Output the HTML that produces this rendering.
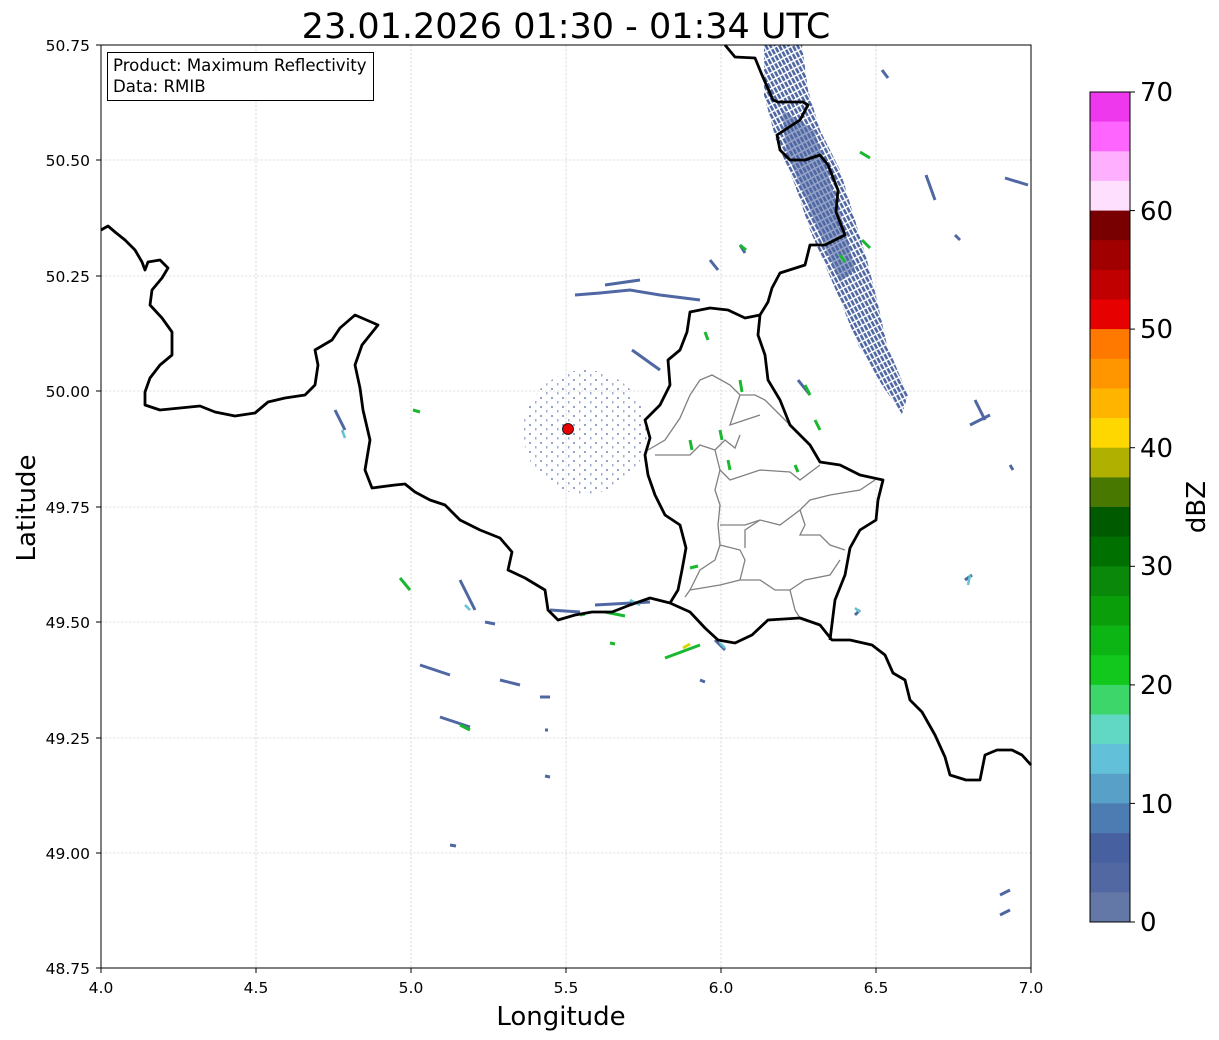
<!DOCTYPE html>
<html><head><meta charset="utf-8"><style>
html,body{margin:0;padding:0;background:#fff;}
svg{display:block;font-family:"DejaVu Sans","Liberation Sans",sans-serif;}
</style></head><body>
<svg width="1219" height="1040" viewBox="0 0 1219 1040" xmlns="http://www.w3.org/2000/svg">
<defs>
<pattern id="band" width="7" height="4" patternUnits="userSpaceOnUse" patternTransform="rotate(62)">
<rect width="5.5" height="2.6" fill="#4f67a3"/>
</pattern>
<pattern id="dots" width="11" height="9" patternUnits="userSpaceOnUse">
<rect x="1" y="1" width="2" height="2" fill="#4f67a3"/>
<rect x="7" y="5" width="1.5" height="2.5" fill="#5a78b0"/>
</pattern>
</defs>
<rect width="1219" height="1040" fill="#fff"/>
<text x="566" y="38" font-size="35" text-anchor="middle">23.01.2026 01:30 - 01:34 UTC</text>
<g stroke="#c8c8c8" stroke-width="0.6" stroke-dasharray="2.5,1.5">
<line x1="256" y1="45" x2="256" y2="968"/><line x1="411" y1="45" x2="411" y2="968"/>
<line x1="566" y1="45" x2="566" y2="968"/><line x1="721" y1="45" x2="721" y2="968"/>
<line x1="876" y1="45" x2="876" y2="968"/>
<line x1="101" y1="160" x2="1031" y2="160"/><line x1="101" y1="276" x2="1031" y2="276"/>
<line x1="101" y1="391" x2="1031" y2="391"/><line x1="101" y1="507" x2="1031" y2="507"/>
<line x1="101" y1="622" x2="1031" y2="622"/><line x1="101" y1="738" x2="1031" y2="738"/>
<line x1="101" y1="853" x2="1031" y2="853"/>
</g>
<polygon points="764,45 802,45 808,90 820,130 840,170 855,220 867,260 877,300 887,345 908,395 902,414 882,385 858,345 840,300 825,265 810,230 795,185 776,140 764,95" fill="url(#band)"/>
<polygon points="782,110 814,130 830,180 845,230 855,270 840,282 820,235 802,190 786,150" fill="#5068a3" opacity="0.6"/>
<circle cx="585" cy="432" r="62" fill="url(#dots)" opacity="0.6"/>
<g stroke="#4f67a3" stroke-width="3" fill="none">
<path d="M575,295 L600,293 L630,290 L660,295 L700,300"/>
<path d="M605,285 L640,280"/><path d="M632,350 L660,370"/>
<path d="M926,175 L935,200"/><path d="M1005,178 L1028,185"/>
<path d="M975,400 L985,420"/><path d="M970,425 L990,415"/>
<path d="M420,665 L450,675"/><path d="M500,680 L520,685"/>
<path d="M440,717 L470,727"/><path d="M540,697 L550,697"/>
<path d="M1000,895 L1010,890"/><path d="M1000,915 L1010,910"/>
<path d="M595,605 L650,602"/><path d="M740,245 L745,253"/>
<path d="M710,260 L718,270"/><path d="M955,235 L960,240"/>
<path d="M965,580 L972,575"/><path d="M855,615 L860,610"/>
<path d="M485,622 L495,624"/><path d="M550,610 L580,612"/>
<path d="M715,640 L725,650"/><path d="M545,730 L548,730"/>
<path d="M450,845 L456,846"/><path d="M545,776 L550,777"/>
<path d="M700,680 L705,682"/><path d="M1010,465 L1013,470"/>
<path d="M335,410 L345,430"/><path d="M460,580 L475,610"/>
<path d="M882,70 L888,78"/><path d="M798,380 L810,395"/>
</g>
<g stroke="#19b830" stroke-width="3" fill="none">
<path d="M665,658 L700,645"/><path d="M605,612 L625,616"/>
<path d="M400,578 L410,590"/><path d="M740,245 L746,250"/>
<path d="M862,240 L870,248"/><path d="M860,152 L870,158"/>
<path d="M815,420 L820,430"/><path d="M805,385 L810,395"/>
<path d="M840,255 L845,262"/><path d="M705,332 L708,340"/>
<path d="M740,380 L742,392"/><path d="M720,430 L722,440"/>
<path d="M690,440 L692,450"/><path d="M728,460 L730,470"/>
<path d="M795,465 L798,472"/><path d="M690,568 L698,566"/>
<path d="M610,643 L615,644"/><path d="M580,615 L585,614"/>
<path d="M460,725 L470,730"/><path d="M413,410 L420,412"/>
</g>
<g stroke="#62c4d0" stroke-width="2.5" fill="none">
<path d="M855,608 L860,612"/><path d="M720,643 L725,648"/>
<path d="M465,605 L470,610"/><path d="M968,585 L970,575"/>
<path d="M342,430 L345,438"/><path d="M630,600 L640,605"/>
</g>
<path d="M683,648 L690,644" stroke="#d8d800" stroke-width="3"/>
<g stroke="#808080" stroke-width="1.3" fill="none">
<path d="M648,450 L665,440 L680,418 L690,395 L700,380 L712,375 L730,385 L740,395 L755,395 L765,400 L775,410 L785,420 L795,430"/>
<path d="M740,395 L735,410 L730,425 L745,420 L760,415"/>
<path d="M655,455 L690,455 L700,445 L715,450 L725,440 L735,448 L740,435"/>
<path d="M715,450 L720,470 L730,480 L760,470 L790,472 L800,480 L820,465"/>
<path d="M720,470 L715,490 L720,505 L718,525 L720,545 L715,560 L700,570 L690,590 L685,597"/>
<path d="M720,525 L745,525 L760,520 L780,525 L800,510 L810,500 L830,495 L860,490 L875,480"/>
<path d="M720,545 L740,550 L745,560 L740,580 L760,580 L775,590 L790,590 L805,580 L830,575 L840,560"/>
<path d="M690,590 L720,585 L740,580"/>
<path d="M790,590 L795,610 L800,618"/>
<path d="M760,520 L745,530 L745,548"/>
<path d="M800,510 L805,525 L800,535 L820,535 L830,545 L845,550"/>
</g>
<g stroke="#000" stroke-width="2.8" fill="none" stroke-linejoin="round">
<path d="M101,230 L108,226 L115,232 L125,240 L135,250 L142,262 L145,270 L148,262 L160,260 L168,268 L162,278 L152,290 L150,305 L162,318 L172,332 L172,355 L160,365 L150,378 L145,392 L145,405 L160,410 L180,408 L200,406 L215,412 L235,416 L255,413 L268,402 L285,398 L305,395 L315,385 L318,365 L315,350 L332,340 L340,328 L355,315 L378,325 L370,335 L362,345 L355,365 L360,388 L363,410 L370,440 L365,470 L372,488 L395,485 L405,484 L415,492 L430,500 L445,505 L460,520 L480,530 L500,538 L512,552 L508,570 L525,578 L545,590 L548,610 L558,620 L575,615 L592,612 L612,612 L630,605 L650,598 L670,603 L690,612 L705,628 L718,640 L735,643 L752,635 L768,620 L800,618 L820,625 L832,640 L850,640 L872,645 L885,655 L893,673 L905,680 L910,700 L922,712 L935,735 L945,757 L950,775 L966,780 L980,780 L985,755 L997,750 L1012,750 L1022,755 L1031,765"/>
<path d="M670,603 L678,590 L682,570 L686,548 L680,525 L665,515 L655,495 L648,475 L645,455 L650,438 L645,420 L660,405 L670,385 L668,360 L680,350 L687,332 L690,312 L710,308 L728,310 L745,318 L760,315 L758,335 L765,355 L768,380 L780,400 L790,425 L810,445 L820,462 L840,465 L860,475 L883,480 L878,500 L876,520 L860,530 L850,548 L845,575 L835,600 L830,640"/>
<path d="M760,315 L768,302 L772,288 L780,273 L805,265 L810,245 L825,245 L845,235 L836,212 L838,190 L828,165 L820,155 L805,160 L790,160 L780,150 L777,135 L800,120 L808,105 L803,102 L778,102 L773,100 L762,75 L755,58 L735,57 L725,45"/>
</g>
<circle cx="568" cy="429" r="5.5" fill="#e60000" stroke="#000" stroke-width="0.8"/>
<rect x="107.5" y="52.5" width="266" height="48" fill="#fff" stroke="#000" stroke-width="1"/>
<text x="113" y="71" font-size="16.6">Product: Maximum Reflectivity</text>
<text x="113" y="92" font-size="16.6">Data: RMIB</text>
<rect x="101" y="45" width="930" height="923" fill="none" stroke="#000" stroke-width="1"/>
<g stroke="#000" stroke-width="1">
<line x1="101" y1="968" x2="101" y2="973"/><line x1="256" y1="968" x2="256" y2="973"/><line x1="411" y1="968" x2="411" y2="973"/><line x1="566" y1="968" x2="566" y2="973"/><line x1="721" y1="968" x2="721" y2="973"/><line x1="876" y1="968" x2="876" y2="973"/><line x1="1031" y1="968" x2="1031" y2="973"/>
<line x1="96" y1="45" x2="101" y2="45"/><line x1="96" y1="160" x2="101" y2="160"/><line x1="96" y1="276" x2="101" y2="276"/><line x1="96" y1="391" x2="101" y2="391"/><line x1="96" y1="507" x2="101" y2="507"/><line x1="96" y1="622" x2="101" y2="622"/><line x1="96" y1="738" x2="101" y2="738"/><line x1="96" y1="853" x2="101" y2="853"/><line x1="96" y1="968" x2="101" y2="968"/>
</g>
<g font-size="15.5" text-anchor="middle">
<text x="101" y="993">4.0</text><text x="256" y="993">4.5</text><text x="411" y="993">5.0</text><text x="566" y="993">5.5</text><text x="721" y="993">6.0</text><text x="876" y="993">6.5</text><text x="1031" y="993">7.0</text>
</g>
<g font-size="15.5" text-anchor="end">
<text x="90" y="51">50.75</text><text x="90" y="166">50.50</text><text x="90" y="282">50.25</text><text x="90" y="397">50.00</text><text x="90" y="513">49.75</text><text x="90" y="628">49.50</text><text x="90" y="744">49.25</text><text x="90" y="859">49.00</text><text x="90" y="974">48.75</text>
</g>
<text x="561" y="1025" font-size="26" text-anchor="middle">Longitude</text>
<text transform="translate(35,508) rotate(-90)" font-size="26" text-anchor="middle">Latitude</text>
<g>
<rect x="1090" y="92" width="40" height="30" fill="#ee38ee"/>
<rect x="1090" y="121.6" width="40" height="30" fill="#fe64fe"/>
<rect x="1090" y="151.3" width="40" height="30" fill="#feb0fe"/>
<rect x="1090" y="180.9" width="40" height="30" fill="#fee0fe"/>
<rect x="1090" y="210.6" width="40" height="30" fill="#780000"/>
<rect x="1090" y="240.2" width="40" height="30" fill="#a00000"/>
<rect x="1090" y="269.9" width="40" height="30" fill="#c00000"/>
<rect x="1090" y="299.5" width="40" height="30" fill="#e60000"/>
<rect x="1090" y="329.1" width="40" height="30" fill="#ff7800"/>
<rect x="1090" y="358.8" width="40" height="30" fill="#ff9600"/>
<rect x="1090" y="388.4" width="40" height="30" fill="#ffb400"/>
<rect x="1090" y="418.1" width="40" height="30" fill="#ffd700"/>
<rect x="1090" y="447.7" width="40" height="30" fill="#b0b000"/>
<rect x="1090" y="477.4" width="40" height="30" fill="#487800"/>
<rect x="1090" y="507" width="40" height="30" fill="#005a00"/>
<rect x="1090" y="536.6" width="40" height="30" fill="#007000"/>
<rect x="1090" y="566.3" width="40" height="30" fill="#0a880a"/>
<rect x="1090" y="595.9" width="40" height="30" fill="#0a9e0a"/>
<rect x="1090" y="625.6" width="40" height="30" fill="#0cb414"/>
<rect x="1090" y="655.2" width="40" height="30" fill="#12c81c"/>
<rect x="1090" y="684.9" width="40" height="30" fill="#3cd66a"/>
<rect x="1090" y="714.5" width="40" height="30" fill="#60d8c4"/>
<rect x="1090" y="744.1" width="40" height="30" fill="#62c0d8"/>
<rect x="1090" y="773.8" width="40" height="30" fill="#58a0c8"/>
<rect x="1090" y="803.4" width="40" height="30" fill="#4c7cb2"/>
<rect x="1090" y="833.1" width="40" height="30" fill="#4660a0"/>
<rect x="1090" y="862.7" width="40" height="30" fill="#5268a2"/>
<rect x="1090" y="892.4" width="40" height="29.6" fill="#6478a8"/>
<rect x="1090" y="92" width="40" height="830" fill="none" stroke="#000" stroke-width="1"/>
</g>
<g stroke="#000" stroke-width="1">
<line x1="1130" y1="92" x2="1135" y2="92"/><line x1="1130" y1="210.6" x2="1135" y2="210.6"/><line x1="1130" y1="329.1" x2="1135" y2="329.1"/><line x1="1130" y1="447.7" x2="1135" y2="447.7"/><line x1="1130" y1="566.3" x2="1135" y2="566.3"/><line x1="1130" y1="684.9" x2="1135" y2="684.9"/><line x1="1130" y1="803.4" x2="1135" y2="803.4"/><line x1="1130" y1="922" x2="1135" y2="922"/>
</g>
<g font-size="26">
<text x="1140" y="101">70</text><text x="1140" y="220">60</text><text x="1140" y="338">50</text><text x="1140" y="457">40</text><text x="1140" y="575">30</text><text x="1140" y="694">20</text><text x="1140" y="813">10</text><text x="1140" y="931">0</text>
</g>
<text transform="translate(1205,507) rotate(-90)" font-size="26" text-anchor="middle">dBZ</text>
</svg>
</body></html>
